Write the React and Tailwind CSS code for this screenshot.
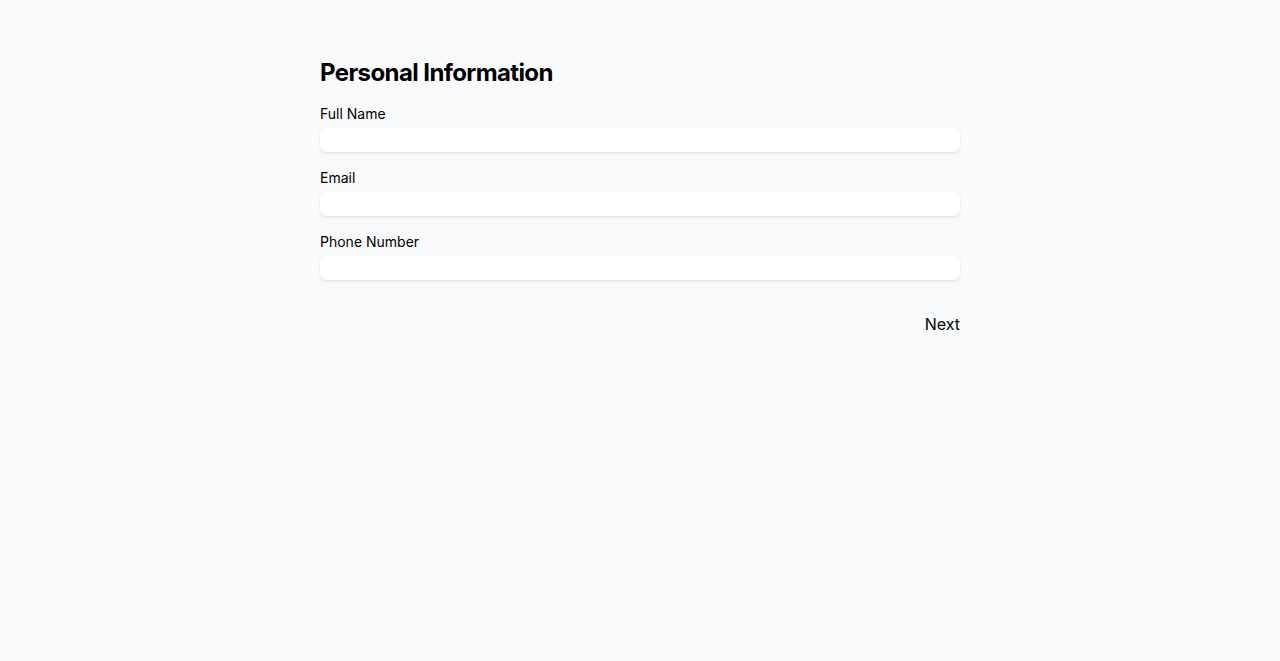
export default function App() {
  const fields = [
    { id: 'fullName', label: 'Full Name', type: 'text' },
    { id: 'email', label: 'Email', type: 'email' },
    { id: 'phone', label: 'Phone Number', type: 'tel' },
  ]

  return (
    <div className="min-h-[660px] bg-gray-50 font-['Inter',sans-serif] text-black">
      <div className="max-w-[640px] mx-auto pt-[57px]">
        <h2 className="text-2xl font-bold tracking-tight mb-[15px]">Personal Information</h2>
        <div className="space-y-4">
          {fields.map((f) => (
            <div key={f.id}>
              <label htmlFor={f.id} className="block text-sm mb-1">
                {f.label}
              </label>
              <input
                id={f.id}
                type={f.type}
                className="block w-full h-6 bg-white rounded-md shadow-sm outline-none px-3 text-sm"
              />
            </div>
          ))}
        </div>
        <div className="flex justify-end mt-6">
          <button className="py-2 text-base">Next</button>
        </div>
      </div>
    </div>
  )
}
